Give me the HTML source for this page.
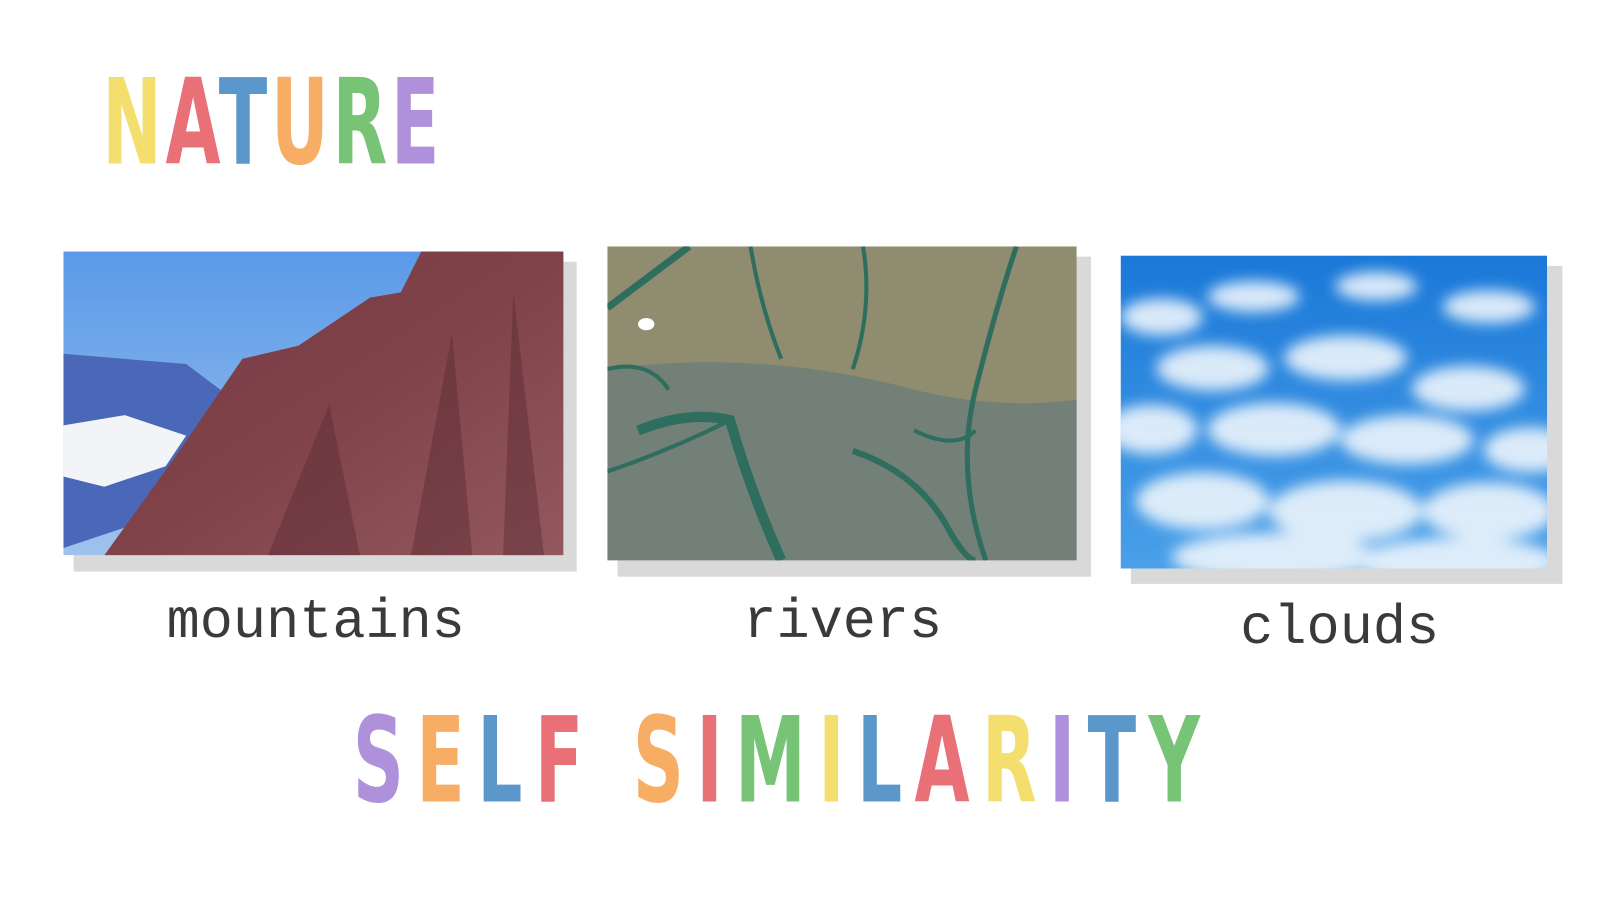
<!DOCTYPE html>
<html><head><style>
body{margin:0;width:1600px;height:900px;background:#fff;position:relative;overflow:hidden;font-family:"Liberation Sans",sans-serif}
#w{position:absolute;left:0;top:0;width:1565px;height:880px;transform:scale(1.0225);transform-origin:0 0}
.t{position:absolute;font-family:"DejaVu Sans",sans-serif;font-weight:bold;font-size:116px;line-height:1;white-space:nowrap;transform-origin:0 0;opacity:0.92}
.sh{position:absolute;background:#d9d9d9}
.lbl{position:absolute;font-family:"Liberation Mono",monospace;font-size:54px;color:#3a3a3a;line-height:1}
svg{position:absolute;display:block}
</style></head><body><div id="w">
<div class="t" style="left:100px;top:63px;transform:scaleX(0.6);letter-spacing:6px">
<span style="color:#f2dc62">N</span><span style="color:#e6646b">A</span><span style="color:#4e8fc6">T</span><span style="color:#f8a657">U</span><span style="color:#6dbf6c">R</span><span style="color:#a887d8">E</span></div>

<div class="sh" style="left:72px;top:256px;width:492px;height:303px"></div>
<svg style="left:62px;top:246px" width="489" height="297" viewBox="0 0 489 297">
<defs><linearGradient id="sk" x1="0" y1="0" x2="0" y2="1"><stop offset="0" stop-color="#5a9ae8"/><stop offset="1" stop-color="#9fc2ee"/></linearGradient>
<linearGradient id="rk" x1="0" y1="0" x2="1" y2="1"><stop offset="0" stop-color="#7a3c44"/><stop offset="0.5" stop-color="#7f4249"/><stop offset="1" stop-color="#93585e"/></linearGradient></defs>
<rect width="489" height="297" fill="url(#sk)"/>
<path d="M0 100 L60 105 L120 110 L160 140 L180 230 L0 290Z" fill="#4a67b8"/>
<path d="M0 170 L60 160 L120 180 L100 210 L40 230 L0 220Z" fill="#f2f4f8"/>
<path d="M40 297 L110 200 L175 105 L230 92 L300 45 L330 40 L350 0 L489 0 L489 297Z" fill="url(#rk)"/>
<path d="M200 297 L260 150 L290 297Z M340 297 L380 80 L400 297Z M430 297 L440 40 L470 297Z" fill="#5a2a32" opacity="0.45"/>
</svg>

<div class="sh" style="left:604px;top:251px;width:463px;height:313px"></div>
<svg style="left:594px;top:241px" width="459" height="307" viewBox="0 0 459 307">
<rect width="459" height="307" fill="#8f8c70"/>
<path d="M0 120 Q150 100 300 140 Q380 160 459 150 L459 307 L0 307Z" fill="#728078"/>
<g fill="none" stroke="#2f6e5e" stroke-width="4">
<path d="M0 60 Q40 30 80 0" stroke-width="7"/><path d="M30 180 Q80 160 120 170 Q140 240 170 307" stroke-width="10"/>
<path d="M0 220 Q60 200 120 170"/><path d="M240 200 Q300 220 330 270 Q350 307 360 307" stroke-width="6"/>
<path d="M400 0 Q380 60 360 140 Q340 220 370 307" stroke-width="5"/><path d="M140 0 Q150 60 170 110"/><path d="M250 0 Q260 60 240 120"/>
<path d="M300 180 Q340 200 360 180"/><path d="M0 120 Q40 110 60 140"/>
</g>
<ellipse cx="38" cy="76" rx="8" ry="6" fill="#fff"/>
</svg>

<div class="sh" style="left:1106px;top:260px;width:422px;height:311px"></div>
<svg style="left:1096px;top:250px" width="417" height="306" viewBox="0 0 417 306">
<defs><linearGradient id="cl" x1="0" y1="0" x2="0" y2="1"><stop offset="0" stop-color="#1a78d8"/><stop offset="1" stop-color="#4aa0e8"/></linearGradient>
<filter id="bl"><feGaussianBlur stdDeviation="7"/></filter></defs>
<rect width="417" height="306" fill="url(#cl)"/>
<g fill="#eef5fc" filter="url(#bl)" opacity="0.9">
<ellipse cx="40" cy="60" rx="40" ry="18"/><ellipse cx="130" cy="40" rx="45" ry="15"/><ellipse cx="250" cy="30" rx="40" ry="14"/><ellipse cx="360" cy="50" rx="45" ry="16"/>
<ellipse cx="90" cy="110" rx="55" ry="22"/><ellipse cx="220" cy="100" rx="60" ry="22"/><ellipse cx="340" cy="130" rx="55" ry="22"/>
<ellipse cx="30" cy="170" rx="45" ry="24"/><ellipse cx="150" cy="170" rx="65" ry="26"/><ellipse cx="280" cy="180" rx="65" ry="24"/><ellipse cx="400" cy="190" rx="45" ry="22"/>
<ellipse cx="80" cy="240" rx="65" ry="28"/><ellipse cx="220" cy="250" rx="75" ry="30"/><ellipse cx="360" cy="250" rx="65" ry="28"/>
<ellipse cx="150" cy="295" rx="100" ry="24"/><ellipse cx="330" cy="300" rx="100" ry="24"/>
</g>
</svg>

<div class="lbl" style="left:163px;top:583px">mountains</div>
<div class="lbl" style="left:727px;top:583px">rivers</div>
<div class="lbl" style="left:1213px;top:589px">clouds</div>

<div class="t" style="left:345px;top:687px;transform:scaleX(0.6);letter-spacing:20px">
<span style="color:#a887d8">S</span><span style="color:#f8a657">E</span><span style="color:#4e8fc6">L</span><span style="color:#e6646b">F</span> <span style="color:#f8a657">S</span><span style="color:#e6646b">I</span><span style="color:#6dbf6c">M</span><span style="color:#f2dc62">I</span><span style="color:#4e8fc6">L</span><span style="color:#e6646b">A</span><span style="color:#f2dc62">R</span><span style="color:#a887d8">I</span><span style="color:#4e8fc6">T</span><span style="color:#6dbf6c">Y</span></div>
</div></body></html>
